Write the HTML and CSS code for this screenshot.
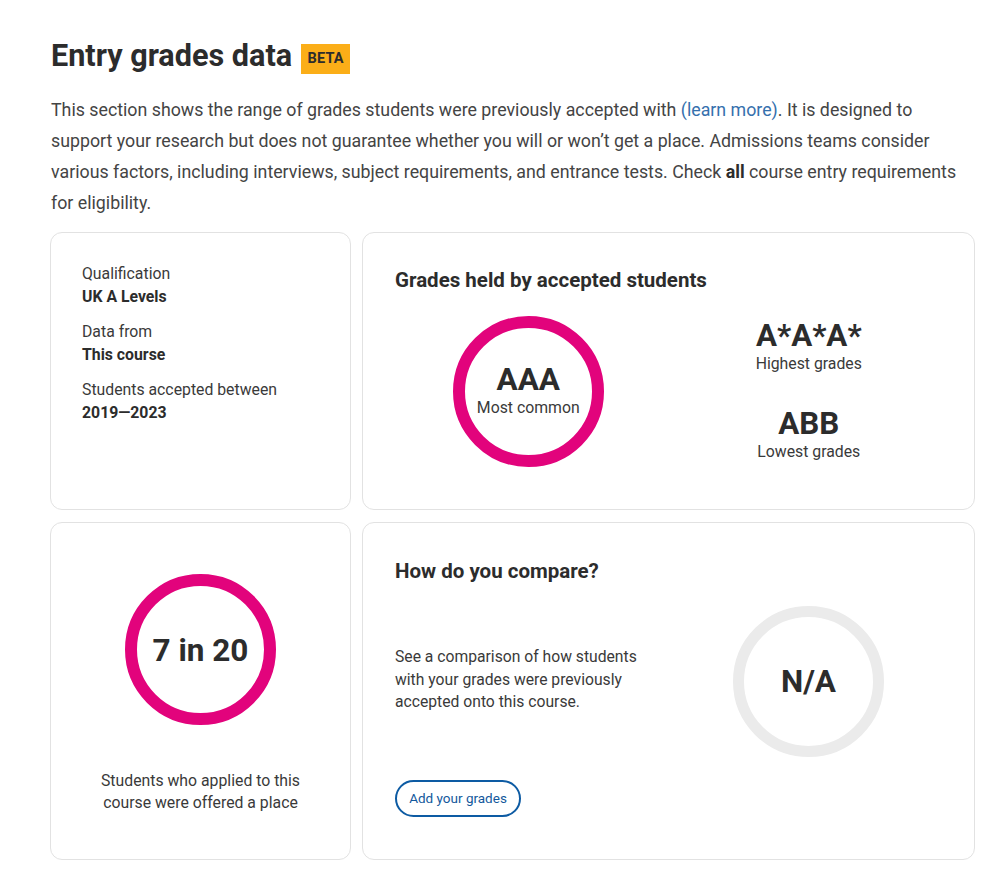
FILE: index.html
```html
<!DOCTYPE html>
<html lang="en">
<head>
<meta charset="utf-8">
<title>Entry grades data</title>
<link rel="stylesheet" href="styles.css">
</head>
<body>
<main class="page">
  <h1 class="title">Entry grades data <span class="badge">BETA</span></h1>
  <p class="intro">This section shows the range of grades students were previously accepted with <a href="#" class="link">(learn more)</a>. It is designed to support your research but does not guarantee whether you will or won’t get a place. Admissions teams consider various factors, including interviews, subject requirements, and entrance tests. Check <strong>all</strong> course entry requirements for eligibility.</p>

  <div class="grid">
    <section class="card card-info">
      <dl class="facts">
        <div class="fact"><dt>Qualification</dt><dd>UK A Levels</dd></div>
        <div class="fact"><dt>Data from</dt><dd>This course</dd></div>
        <div class="fact"><dt>Students accepted between</dt><dd>2019—2023</dd></div>
      </dl>
    </section>

    <section class="card card-grades">
      <h2 class="card-title">Grades held by accepted students</h2>
      <div class="grades-row">
        <div class="grades-col">
          <div class="ring ring-pink">
            <span class="ring-value">AAA</span>
            <span class="ring-label">Most common</span>
          </div>
        </div>
        <div class="grades-col grades-range">
          <div class="range-item">
            <span class="range-value">A*A*A*</span>
            <span class="range-label">Highest grades</span>
          </div>
          <div class="range-item">
            <span class="range-value">ABB</span>
            <span class="range-label">Lowest grades</span>
          </div>
        </div>
      </div>
    </section>

    <section class="card card-offers">
      <div class="ring ring-pink">
        <span class="ring-value ring-value-lg">7 in 20</span>
      </div>
      <p class="offers-caption">Students who applied to this course were offered a place</p>
    </section>

    <section class="card card-compare">
      <div class="compare-left">
        <h2 class="card-title">How do you compare?</h2>
        <p class="compare-text">See a comparison of how students with your grades were previously accepted onto this course.</p>
        <button class="btn" type="button">Add your grades</button>
      </div>
      <div class="compare-right">
        <div class="ring ring-grey">
          <span class="ring-value">N/A</span>
        </div>
      </div>
    </section>
  </div>
</main>
</body>
</html>
```

FILE: styles.css
```css
* { box-sizing: border-box; }

html, body {
  margin: 0;
  padding: 0;
  background: #ffffff;
}

body {
  font-family: Roboto, "Liberation Sans", Arial, sans-serif;
  color: #333333;
}

.page {
  padding: 36px 29px 10px 51px;
}

.title {
  margin: 0;
  font-size: 30.6px;
  line-height: 40px;
  font-weight: 700;
  color: #2c2c2c;
  display: flex;
  align-items: center;
  gap: 9px;
}

.badge {
  display: inline-block;
  background: #fbae18;
  color: #2c2c2c;
  font-size: 14.5px;
  font-weight: 700;
  line-height: 30px;
  height: 30px;
  width: 49px;
  text-align: center;
  margin-top: 6px;
  letter-spacing: 0.2px;
}

.intro {
  margin: 18px 0 14px;
  font-size: 17.8px;
  line-height: 31px;
  color: #444444;
}

.link {
  color: #3570ad;
  text-decoration: none;
}

.intro strong {
  color: #2c2c2c;
  font-weight: 700;
}

.grid {
  display: grid;
  grid-template-columns: 301px 613px;
  grid-template-rows: 278px 338px;
  column-gap: 11px;
  row-gap: 12px;
  margin-left: -1px;
}

.card {
  border: 1px solid #e2e2e2;
  border-radius: 12px;
  background: #fff;
}

/* card 1 */
.card-info {
  padding: 30px 31px;
}

.facts {
  margin: 0;
  display: flex;
  flex-direction: column;
  gap: 13px;
}

.fact dt {
  font-size: 15.8px;
  line-height: 22px;
  color: #3a3a3a;
}

.fact dd {
  margin: 0;
  font-size: 15.8px;
  line-height: 23px;
  font-weight: 700;
  color: #2c2c2c;
}

/* titles */
.card-title {
  margin: 0;
  font-size: 20.5px;
  line-height: 24px;
  font-weight: 700;
  color: #2c2c2c;
}

/* card 2 */
.card-grades {
  padding: 35px 32px 20px;
}

.grades-row {
  display: flex;
  margin-top: 24px;
}

.grades-col {
  flex: 1 1 0;
  display: flex;
  justify-content: center;
}

.grades-col:first-child {
  padding-right: 6px;
}

.grades-range {
  flex-direction: column;
  align-items: center;
  gap: 32px;
  margin-top: -1px;
  padding-left: 8px;
}

.range-item {
  display: flex;
  flex-direction: column;
  align-items: center;
}

.range-value {
  font-size: 31.3px;
  line-height: 34px;
  font-weight: 700;
  color: #2c2c2c;
}

.range-label {
  font-size: 15.8px;
  line-height: 22px;
  color: #3a3a3a;
}

/* rings */
.ring {
  width: 151px;
  height: 151px;
  border-radius: 50%;
  display: flex;
  flex-direction: column;
  align-items: center;
  justify-content: center;
  flex: none;
}

.ring-pink {
  border: 12px solid #e2037c;
}

.ring-grey {
  border: 11px solid #ebebeb;
}

.ring-value {
  font-size: 31.5px;
  line-height: 34px;
  font-weight: 700;
  color: #2c2c2c;
}

.ring-pink .ring-label {
  font-size: 15.8px;
  line-height: 22px;
  color: #3a3a3a;
  margin-bottom: 6px;
}

.card-grades .ring-value {
  margin-top: 4px;
}

.ring-value-lg {
  margin-top: 2px;
}

/* card 3 */
.card-offers {
  display: flex;
  flex-direction: column;
  align-items: center;
  padding: 51px 20px 0;
}

.offers-caption {
  margin: 45px 0 0;
  width: 225px;
  text-align: center;
  font-size: 15.8px;
  line-height: 22px;
  color: #3a3a3a;
}

/* card 4 */
.card-compare {
  display: flex;
  padding: 36px 32px 0;
}

.compare-left {
  width: 273px;
  display: flex;
  flex-direction: column;
  align-items: flex-start;
}

.compare-text {
  margin: 63px 0 0;
  width: 255px;
  font-size: 15.7px;
  line-height: 22.5px;
  color: #3a3a3a;
}

.btn {
  margin-top: 66px;
  font-family: inherit;
  font-size: 13.5px;
  line-height: 18px;
  color: #13589c;
  background: #fff;
  border: 2px solid #0d5ba3;
  border-radius: 19px;
  height: 37px;
  width: 126px;
  padding: 0;
  cursor: pointer;
}

.compare-right {
  flex: 1 1 0;
  display: flex;
  justify-content: center;
  align-items: flex-start;
  padding-top: 47px;
  padding-left: 7px;
}
```
